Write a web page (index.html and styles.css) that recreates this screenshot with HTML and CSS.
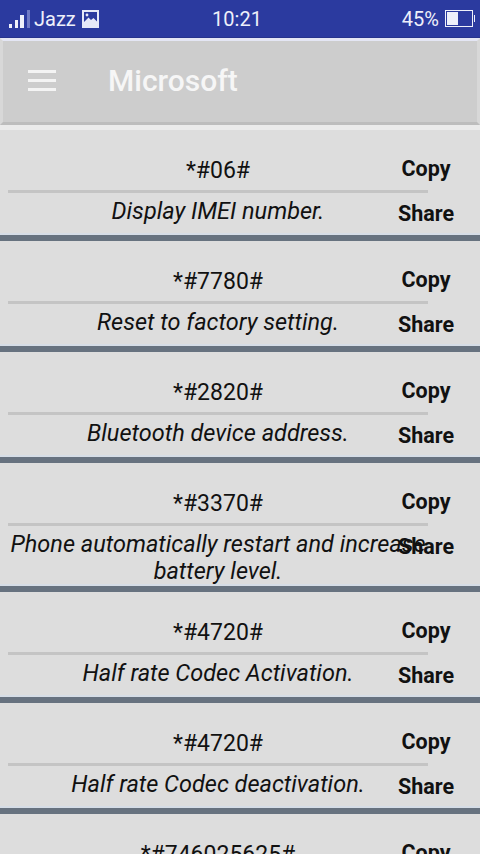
FILE: index.html
```html
<!DOCTYPE html>
<html lang="en">
<head>
  <meta charset="UTF-8" />
  <meta name="viewport" content="width=device-width, initial-scale=1.0"/>
  <title>Microsoft</title>
  <link rel="stylesheet" href="styles.css">
</head>
<body>
  <div class="status-bar">
    <div class="status-left">
      <svg class="signal" width="22" height="18" viewBox="0 0 22 18">
        <rect x="1" y="14" width="3" height="4" fill="#eef0fa"/>
        <rect x="7" y="10" width="3" height="8" fill="#eef0fa"/>
        <rect x="12" y="5" width="4" height="13" fill="#eef0fa"/>
        <rect x="19" y="0" width="3" height="18" fill="#6f7ac4"/>
      </svg>
      <span>Jazz</span>
      <svg class="pic" width="17" height="18" viewBox="0 0 17 18">
        <rect width="17" height="18" fill="#e6e9f8"/>
        <rect x="2" y="2" width="13" height="10" fill="#2b3a9f"/>
        <path d="M2 12 L6.5 7.5 L9 10 L11.5 8 L15 11.5 L15 15 L2 15 Z" fill="#e6e9f8"/>
        <circle cx="5" cy="5" r="1.4" fill="#e6e9f8"/>
      </svg>
    </div>
    <div class="status-time">10:21</div>
    <div class="status-right">
      <span>45%</span>
      <div class="battery"><div class="battery-level"></div></div>
    </div>
  </div>

  <div class="toolbar">
    <svg class="menu-icon" width="28" height="21" viewBox="0 0 28 21">
      <rect y="0" width="28" height="3" fill="#f4f4f4"/>
      <rect y="9" width="28" height="3" fill="#f4f4f4"/>
      <rect y="18" width="28" height="3" fill="#f4f4f4"/>
    </svg>
    <div class="toolbar-title">Microsoft</div>
  </div>

  <div class="code-list" id="codeList">
    <div class="code-item">
      <div class="code-text">
        <div class="code">*#06#</div>
        <div class="desc">Display IMEI number.</div>
      </div>
      <div class="actions"><span>Copy</span><span>Share</span></div>
    </div>
    <div class="code-item">
      <div class="code-text">
        <div class="code">*#7780#</div>
        <div class="desc">Reset to factory setting.</div>
      </div>
      <div class="actions"><span>Copy</span><span>Share</span></div>
    </div>
    <div class="code-item">
      <div class="code-text">
        <div class="code">*#2820#</div>
        <div class="desc">Bluetooth device address.</div>
      </div>
      <div class="actions"><span>Copy</span><span>Share</span></div>
    </div>
    <div class="code-item">
      <div class="code-text">
        <div class="code">*#3370#</div>
        <div class="desc">Phone automatically restart and increase battery level.</div>
      </div>
      <div class="actions"><span>Copy</span><span>Share</span></div>
    </div>
    <div class="code-item">
      <div class="code-text">
        <div class="code">*#4720#</div>
        <div class="desc">Half rate Codec Activation.</div>
      </div>
      <div class="actions"><span>Copy</span><span>Share</span></div>
    </div>
    <div class="code-item">
      <div class="code-text">
        <div class="code">*#4720#</div>
        <div class="desc">Half rate Codec deactivation.</div>
      </div>
      <div class="actions"><span>Copy</span><span>Share</span></div>
    </div>
    <div class="code-item">
      <div class="code-text">
        <div class="code">*#746025625#</div>
      </div>
      <div class="actions"><span>Copy</span></div>
    </div>
  </div>
</body>
</html>
```

FILE: styles.css
```css
* {
  box-sizing: border-box;
}

html, body {
  height: 854px;
  overflow: hidden;
}

body {
  font-family: Roboto, sans-serif;
  background-color: #ebebeb;
  color: #111;
  margin: 0;
  padding: 0;
}

.status-bar {
  height: 38px;
  background: #2b3a9f;
  color: #eef0fa;
  font-size: 20px;
  display: grid;
  grid-template-columns: 1fr auto 1fr;
  align-items: center;
  border-bottom: 1px solid #26338c;
}

.status-left {
  display: flex;
  align-items: center;
  padding-left: 8px;
}

.status-left span {
  margin: 0 6px 0 4px;
}

.status-time {
  padding-right: 6px;
}

.status-right {
  display: flex;
  align-items: center;
  justify-content: flex-end;
  padding-right: 7px;
  gap: 6px;
}

.battery {
  position: relative;
  width: 28px;
  height: 17px;
  border: 1px solid #eef0fa;
  padding: 1px;
}

.battery::after {
  content: "";
  position: absolute;
  top: 4px;
  right: -3px;
  width: 1px;
  height: 7px;
  background: #eef0fa;
}

.battery-level {
  width: 45%;
  height: 100%;
  background: #eef0fa;
}

.toolbar {
  height: 87px;
  background: #cdcdcd;
  border: 3px solid #d8d8d8;
  border-top-color: #e4e6f4;
  border-bottom-color: #bdbdbd;
  display: flex;
  align-items: center;
  padding: 0 0 2px 25px;
  gap: 52px;
}

.toolbar-title {
  color: #f6f6f6;
  font-size: 30px;
  font-weight: 500;
}

.code-list {
  padding-top: 5px;
}

.code-item {
  position: relative;
  min-height: 111px;
  background: #dddddd;
  border-bottom: 6px solid #67727f;
  box-shadow: inset 0 -2px 0 #d6dde6;
  padding: 26px 0 1px;
}

.code-text {
  width: 436px;
  text-align: center;
}

.code {
  font-size: 23px;
  line-height: 30px;
  margin: 0 8px;
  padding-bottom: 4px;
  border-bottom: 3px solid #c4c4c4;
}

.desc {
  font-size: 23.5px;
  font-style: italic;
  line-height: 27px;
  padding-top: 5px;
}

.actions {
  position: absolute;
  top: 27px;
  right: 26px;
  width: 56px;
  display: flex;
  flex-direction: column;
  align-items: center;
  gap: 21px;
  font-size: 21.5px;
  font-weight: 700;
  line-height: 24px;
}
```
